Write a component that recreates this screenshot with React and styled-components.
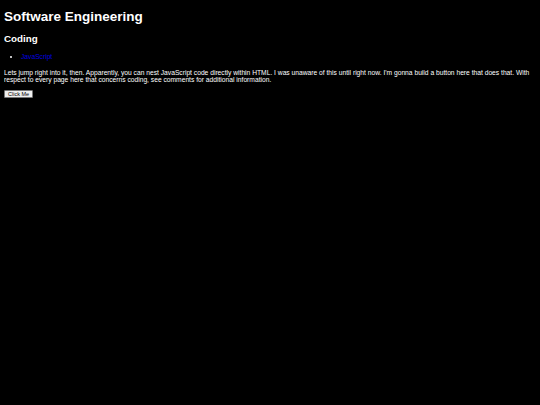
import styled, { createGlobalStyle } from "styled-components";

const GlobalStyle = createGlobalStyle`
  html {
    background: #000;
  }
  body {
    margin: 4px;
    background: #000;
    color: #fff;
    font-family: "Liberation Sans", Arial, sans-serif;
    font-size: 6.7px;
  }
`;

const Title = styled.h1`
  font-size: 13.5px;
  font-weight: bold;
  margin: 4.8px 0 9px;
`;

const Subtitle = styled.h2`
  font-size: 9.8px;
  font-weight: bold;
  margin: 9.3px 0 8.5px;
`;

const TopicList = styled.ul`
  margin: 8.5px 0 8px;
  padding-left: 17px;
  line-height: 8px;
`;

const TopicLink = styled.a`
  color: #0000e0;
  text-decoration: none;
`;

const Text = styled.p`
  line-height: 7.3px;
  margin: 8px 0 6.8px;
`;

const Button = styled.button`
  display: block;
  font-family: "Liberation Sans", Arial, sans-serif;
  font-size: 5.5px;
  line-height: 6px;
  padding: 0 3px;
  background: #efefef;
  color: #000;
  border: 1px solid #767676;
  border-radius: 1px;
`;

const App = () => {
  return (
    <>
      <GlobalStyle />
      <Title>Software Engineering</Title>
      <Subtitle>Coding</Subtitle>
      <TopicList>
        <li>
          <TopicLink href="#">JavaScript</TopicLink>
        </li>
      </TopicList>
      {/* 段落 */}
      <Text>
        Lets jump right into it, then. Apparently, you can nest JavaScript code
        directly within HTML. I was unaware of this until right now. I'm gonna
        build a button here that does that. With respect to every page here that
        concerns coding, see comments for additional information.
      </Text>
      <Button onClick={() => alert("Hello")}>Click Me</Button>
    </>
  );
};

export default App;
